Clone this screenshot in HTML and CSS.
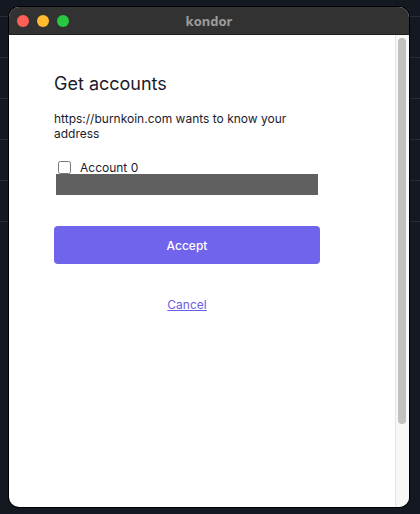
FILE: index.html
```html
<!DOCTYPE html>
<html lang="en">
<head>
  <meta charset="UTF-8">
  <meta name="viewport" content="width=device-width, initial-scale=1.0">
  <title>kondor</title>
  <link rel="stylesheet" href="styles.css">
</head>
<body>
  <div class="window">
    <div class="titlebar">
      <div class="lights">
        <span class="light red"></span>
        <span class="light yellow"></span>
        <span class="light green"></span>
      </div>
      <div class="title">kondor</div>
    </div>
    <div class="content">
      <main class="page">
        <h1>Get accounts</h1>
        <p class="intro">https://burnkoin.com wants to know your address</p>
        <form id="accountsForm">
          <label class="account">
            <input type="checkbox" name="account_0">
            <span>Account 0</span>
          </label>
          <div class="address"></div>
          <button type="button" class="accept">Accept</button>
          <div class="cancel-row">
            <a href="#" class="cancel">Cancel</a>
          </div>
        </form>
      </main>
      <div class="scrollbar">
        <div class="thumb"></div>
      </div>
    </div>
  </div>
</body>
</html>
```

FILE: styles.css
```css
html, body {
  margin: 0;
  height: 100%;
}
body {
  background-color: #141821;
  background-image: repeating-linear-gradient(to bottom, transparent 0, transparent 15px, #272c37 15px, #272c37 16px, transparent 16px, transparent 41px);
  background-size: 100% 221px;
  background-repeat: no-repeat;
  background-position: 0 1px;
  padding: 7px 0 0 9px;
  box-sizing: border-box;
  font-family: Inter, "Noto Sans", sans-serif;
}
.window {
  width: 400px;
  height: 500px;
  border-radius: 10px;
  overflow: hidden;
  display: flex;
  flex-direction: column;
  background: #fff;
  box-shadow: 0 0 0 1px #000;
}
.titlebar {
  height: 28px;
  background: #333232;
  border-bottom: 1px solid #1e1e1e;
  box-sizing: border-box;
  display: flex;
  align-items: center;
  position: relative;
}
.lights {
  display: flex;
  gap: 8px;
  padding-left: 8px;
}
.light {
  width: 12px;
  height: 12px;
  border-radius: 50%;
}
.red { background: #fe5f57; }
.yellow { background: #febc2e; }
.green { background: #28c840; }
.title {
  position: absolute;
  left: 0;
  right: 0;
  text-align: center;
  color: #9c9c9c;
  font-weight: 700;
  font-size: 13px;
  font-family: "Noto Sans", Inter, sans-serif;
}
.content {
  flex: 1;
  display: flex;
}
.page {
  flex: 1;
  padding: 38px 0 0 45px;
}
h1 {
  margin: 0;
  font-size: 18px;
  font-weight: 400;
  color: #1c1b2e;
  line-height: 22px;
}
.intro {
  width: 266px;
  margin: 16px 0 0;
  font-size: 12px;
  line-height: 15px;
  color: #1c1b2e;
}
.account {
  display: flex;
  align-items: center;
  margin-top: 19px;
  margin-left: 4px;
  font-size: 12px;
  color: #1c1b2e;
  height: 14px;
}
.account input {
  width: 13px;
  height: 13px;
  margin: 0 9px 0 0;
}
.address {
  width: 262px;
  height: 21px;
  margin: 0 0 0 2px;
  background: #606060;
}
.accept {
  display: block;
  width: 266px;
  height: 38px;
  margin-top: 31px;
  border: none;
  border-radius: 4px;
  background: #7063ec;
  color: #fff;
  font-family: Inter, sans-serif;
  font-size: 12px;
  font-weight: 500;
  cursor: pointer;
}
.cancel-row {
  width: 266px;
  text-align: center;
  margin-top: 33px;
  font-size: 12px;
  line-height: 15px;
}
.cancel {
  color: #6a5ee8;
}
.scrollbar {
  width: 14px;
  background: #f8f8f8;
  border-left: 1px solid #e4e4e4;
  padding: 3px 0 0 2px;
  box-sizing: border-box;
}
.thumb {
  width: 8px;
  height: 386px;
  border-radius: 4px;
  background: #c1c1c1;
}
```
